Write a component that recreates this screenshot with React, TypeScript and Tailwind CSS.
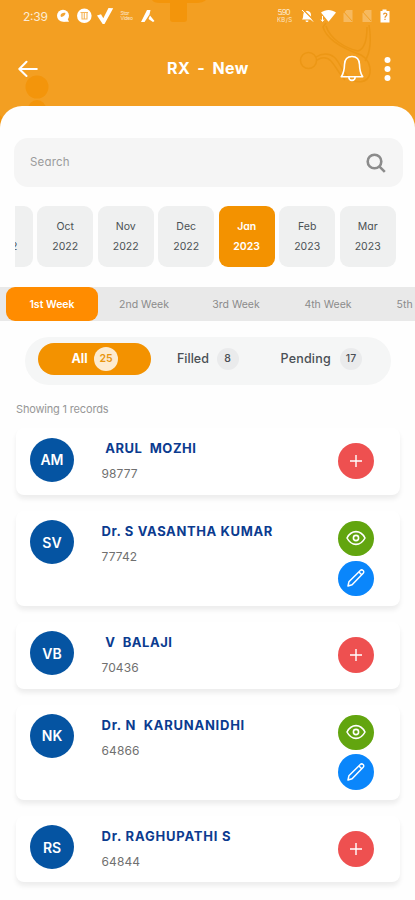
import React from "react";

function StatusBar() {
  return (
    <svg className="block h-8 w-full" viewBox="0 0 415 32" fill="none">
      <text x="23" y="20.5" textLength="25" fontFamily="Inter, sans-serif" fontSize="12" fill="#fff" opacity="0.8">2:39</text>
      <circle cx="63" cy="15.700" r="6" fill="#fff" />
      <path d="M63 21.700h6l-2-4z" fill="#fff" />
      <path d="M60.500 15.500c.3-2 2.500-3 5-2.500-.2 2-1.500 3.500-4.500 4z" fill="#f3a534" />
      <circle cx="84.3" cy="15.8" r="7.3" fill="#fff" />
      <path d="M80.500 12.500h7.500M82 12.500v6M84.300 12.500v7M87 12.500v6M81.500 19h6" stroke="#f5b55a" strokeWidth="1.100" />
      <path d="M97 15.500l4-1.200 2.300 4L108.500 8l4.700 .3L104.500 24h-1.800z" fill="#fff" />
      <g fontFamily="Inter, sans-serif" fontSize="5" fill="#fff" opacity="0.75">
        <text x="120.500" y="15.200" textLength="9">Star</text>
        <text x="120.500" y="20.200" textLength="12.500">Video</text>
      </g>
      <path d="M147 10h3.500l-1 4.500L144.500 22H141zM150 15.500l4.500 5.500-1.500 1-4.500-3z" fill="#fff" />
      <g fontFamily="Inter, sans-serif" fill="#fff" opacity="0.75">
        <text x="277.500" y="15.300" textLength="13" fontSize="8">5.90</text>
        <text x="277" y="22" textLength="15" fontSize="6">KB/S</text>
      </g>
      <path d="M302 19.500c1.300-1.200 1-3 1.300-5 .2-2 1.700-3.300 3.700-3.700 2.500.3 4 1.800 4 4.200 0 2.200.3 3.500 1.500 4.500zM305.500 20.500h3a1.500 1.500 0 0 1-3 0z" fill="#fff" />
      <path d="M303 9.500l10.500 10.500" stroke="#f39f22" strokeWidth="1.200" />
      <path d="M302 10l11 11.500" stroke="#fff" strokeWidth="1" />
      <path d="M321 12.500c4.500-3.500 10.500-3.500 15 0L328.500 21.800z" fill="#fff" />
      <path d="M322.500 16v5M321 19.500l1.500 2 1.500-2" stroke="#fff" strokeWidth="1" />
      <g fill="#fff" opacity="0.28">
        <path d="M346.500 10h6v12h-9v-9zM365.500 10h6v12h-9v-9z" />
      </g>
      <g stroke="#f39f22" strokeWidth="1"><path d="M343 11l9 10M362 11l9 10" /></g>
      <path d="M382.500 9.500h4v1.500h3v11.500h-9V11h2z" fill="#fff" />
      <path d="M383.500 14.500c.5-2 4-1.500 3.200.5-.4 1-1.700 1.200-1.700 2.700m0 1v1.300" stroke="#e8952a" strokeWidth="1.200" />
    </svg>
  );
}

function HeaderArt() {
  return (
    <svg className="absolute inset-0 h-full w-full" viewBox="0 0 415 130" fill="none">
      <g fill="#f39306" opacity="0.8">
        <path d="M152 0h54c-2 2-6 3-9 3h-10v16a3 3 0 0 1-3 3h-11a3 3 0 0 1-3-3V3h-10c-4 0-7-1-8-3z" />
        <circle cx="37" cy="87" r="11.500" />
        <circle cx="37" cy="109" r="9" />
        <circle cx="-4" cy="121" r="7" />
      </g>
      <g stroke="#e9930f" strokeWidth="1.500" opacity="0.65">
        <circle cx="308.500" cy="60.500" r="8" />
        <path d="M316 57c6-4 13-4 18 0s7 12 14 20c7 7 20 7 22-4 1-8-3-15-9-18-14-5-34-14-38-28l3-4M317 60c5-3 10-3 14 1s8 13 14 19M326 26c4 13 19 22 32 25 6-2 9-10 9-24M369 25c3 18 1 28-4 36" />
      </g>
    </svg>
  );
}

function Header() {
  return (
    <header className="relative h-[130px] bg-[#f39f22]">
      <HeaderArt />
      <div className="relative">
        <StatusBar />
        <div className="flex h-[73px] items-center">
          <svg className="ml-[18px] h-5 w-5" viewBox="0 0 20 20" fill="none" stroke="#fff" strokeWidth="2" strokeLinecap="round" strokeLinejoin="round">
            <path d="M18.800 10H2M8.500 2.700L1.300 10l7.200 7" />
          </svg>
          <h1 className="ml-[129px] w-[84px] pb-px text-[16px] font-bold tracking-[0.400px] [word-spacing:3px] whitespace-nowrap text-white">RX - New</h1>
          <svg className="ml-[89px] h-[27px] w-6" viewBox="0 0 24 27" fill="none" stroke="#fff" strokeWidth="1.600" strokeLinejoin="round">
            <path d="M12 1.500C7 1.500 4.700 5 4.500 9.500 4.400 15 3.500 18.500 1.300 21.800h21.400C20.500 18.500 19.600 15 19.500 9.500 19.300 5 17 1.500 12 1.500zM8.800 22c.2 4.500 6.200 4.500 6.400 0" />
          </svg>
          <svg className="ml-5 h-6 w-[7px]" viewBox="0 0 7 24" fill="#fff">
            <circle cx="3.500" cy="3" r="3" />
            <circle cx="3.500" cy="12" r="3" />
            <circle cx="3.500" cy="21" r="3" />
          </svg>
        </div>
      </div>
    </header>
  );
}

const months = [
  { month: "Oct", year: "2022" },
  { month: "Nov", year: "2022" },
  { month: "Dec", year: "2022" },
  { month: "Jan", year: "2023", active: true },
  { month: "Feb", year: "2023" },
  { month: "Mar", year: "2023" },
];

function Months() {
  return (
    <div className="mt-[18.500px] ml-[15px] flex gap-[4.500px] overflow-hidden text-[10.500px] leading-[19.500px] text-[#4b5154]">
      <div className="flex h-[61px] w-[17.700px] shrink-0 items-end overflow-hidden rounded-r-[9px] bg-[#eff0f0] pb-[10px]">
        <span className="-ml-[4px]">2</span>
      </div>
      {months.map((m) => (
        <div
          key={m.month}
          className={
            "flex h-[61px] w-[56px] shrink-0 flex-col items-center justify-center rounded-[9px] pt-[1px] " +
            (m.active ? "bg-[#f39200] font-semibold text-white" : "bg-[#eff0f0]")
          }
        >
          <span>{m.month}</span>
          <span>{m.year}</span>
        </div>
      ))}
    </div>
  );
}

function Weeks() {
  return (
    <div className="mt-5 flex h-[34px] overflow-hidden bg-[#e9e9e9] pl-[6px] text-[10.500px] text-[#8b8b8b]">
      <div className="flex w-[92px] shrink-0 items-center justify-center rounded-[9px] bg-[#ff8c00] pt-[2px] font-semibold text-white">1st Week</div>
      {["2nd Week", "3rd Week", "4th Week", "5th Week"].map((w) => (
        <div key={w} className="flex w-[92px] shrink-0 items-center justify-center pt-[2px] whitespace-nowrap">{w}</div>
      ))}
    </div>
  );
}

function Filters() {
  return (
    <div className="mt-4 ml-[25px] flex h-[48px] w-[366px] items-center rounded-full bg-[#f5f6f6] pb-[3px] text-[12.500px] text-[#4a4f55]">
      <div className="ml-[13px] flex h-8 w-[113px] items-center rounded-full bg-[#f39200] pl-[33.500px] text-white">
        <span className="w-[22.500px] font-bold">All</span>
        <span className="flex h-6 w-6 items-center justify-center rounded-full bg-[#fdebd0] text-[10.500px] font-semibold text-[#e8950f]">25</span>
      </div>
      <div className="ml-[26px] flex items-center">
        <span className="w-[39.500px] font-medium">Filled</span>
        <span className="flex h-[22px] w-[22px] items-center justify-center rounded-full bg-[#eaebec] text-[10.500px] font-medium">8</span>
      </div>
      <div className="ml-[42px] flex items-center">
        <span className="w-[59.500px] font-medium tracking-[0.200px]">Pending</span>
        <span className="flex h-[22px] w-[22px] items-center justify-center rounded-full bg-[#eaebec] text-[10.500px] font-medium">17</span>
      </div>
    </div>
  );
}

function AddButton() {
  return (
    <button className="flex h-9 w-9 items-center justify-center rounded-full bg-[#ee5050]">
      <svg className="h-3 w-3" viewBox="0 0 12 12" stroke="#fff" strokeWidth="1.400">
        <path d="M6 0v12M0 6h12" />
      </svg>
    </button>
  );
}

function ViewButton() {
  return (
    <button className="flex h-9 w-9 items-center justify-center rounded-full bg-[#62a50f]">
      <svg className="h-5 w-5" viewBox="0 0 20 20" fill="none" stroke="#fff" strokeWidth="1.600" strokeLinejoin="round">
        <path d="M1 10c4.500-8.500 13.500-8.500 18 0-4.500 8.500-13.500 8.500-18 0z" />
        <circle cx="10" cy="10" r="2.600" />
      </svg>
    </button>
  );
}

function EditButton() {
  return (
    <button className="flex h-9 w-9 items-center justify-center rounded-full bg-[#0a86fb]">
      <svg className="h-5 w-5" viewBox="0 0 20 20" fill="none" stroke="#fff" strokeWidth="1.500" strokeLinejoin="round">
        <path d="M2 18l.9-4.200L14.300 2.500c.9-.9 2-.7 2.800 0s.9 1.900.1 2.800L6.100 16.700zM12.900 4l2.800 2.800" />
      </svg>
    </button>
  );
}

const records = [
  { initials: "AM", name: " ARUL  MOZHI", id: "98777", filled: false, fit: "tracking-[0.550px]" },
  { initials: "SV", name: "Dr. S VASANTHA KUMAR", id: "77742", filled: true, fit: "tracking-[0.620px]" },
  { initials: "VB", name: " V  BALAJI", id: "70436", filled: false, fit: "tracking-[0.550px]" },
  { initials: "NK", name: "Dr. N  KARUNANIDHI", id: "64866", filled: true, fit: "tracking-[0.750px]" },
  { initials: "RS", name: "Dr. RAGHUPATHI S", id: "64844", filled: false, fit: "tracking-[0.800px]" },
];

function Records() {
  return (
    <div className="mt-[10.600px] flex flex-col gap-4 pl-[16px]">
      {records.map((r) => (
        <article
          key={r.id}
          className={
            "flex w-[384px] rounded-[8px] bg-white py-[10px] pl-[14px] shadow-[0_4px_5px_rgba(0,0,0,0.07)] " +
            (r.filled ? "h-[95.300px]" : "h-[66.600px]")
          }
        >
          <div className="-mt-[0.600px] flex h-11 w-11 shrink-0 items-center justify-center rounded-full bg-[#0554a2] text-[14px] font-semibold text-white">{r.initials}</div>
          <div className="ml-[27.500px] w-[236.500px]">
            <h2 className={"text-[13px] leading-5 font-bold whitespace-pre text-[#0b3b8f] " + r.fit}>{r.name}</h2>
            <p className="mt-[6px] text-[12px] leading-5 tracking-[0.100px] text-[#707070]">{r.id}</p>
          </div>
          <div className={"flex flex-col gap-[4.500px] " + (r.filled ? "" : "justify-center")}>
            {r.filled ? (
              <>
                <ViewButton />
                <EditButton />
              </>
            ) : (
              <AddButton />
            )}
          </div>
        </article>
      ))}
    </div>
  );
}

export default function App() {
  return (
    <div className="h-[900px] w-full overflow-hidden bg-[#fefefe] font-['Inter',sans-serif] [font-feature-settings:'cv11']">
      <Header />
      <main className="relative -mt-6 overflow-hidden rounded-t-[22px] bg-[#fefefe] pt-8 pb-10">
        <div className="ml-[14px] flex h-[49px] w-[389px] items-center justify-between rounded-[14px] bg-[#f5f5f5] pr-[17px] pl-4">
          <span className="text-[11.500px] tracking-[0.200px] text-[#9b9b9b]">Search</span>
          <svg className="h-5 w-5" viewBox="0 0 20 20" fill="none" stroke="#8c8c8c" strokeWidth="2.600">
            <circle cx="8.500" cy="8.500" r="6.800" />
            <path d="M13.300 13.300l5.500 5.500" />
          </svg>
        </div>
        <Months />
        <Weeks />
        <Filters />
        <p className="mt-[15px] ml-4 text-[11px] leading-[18px] tracking-[-0.170px] text-[#979797]">Showing 1 records</p>
        <Records />
      </main>
    </div>
  );
}
